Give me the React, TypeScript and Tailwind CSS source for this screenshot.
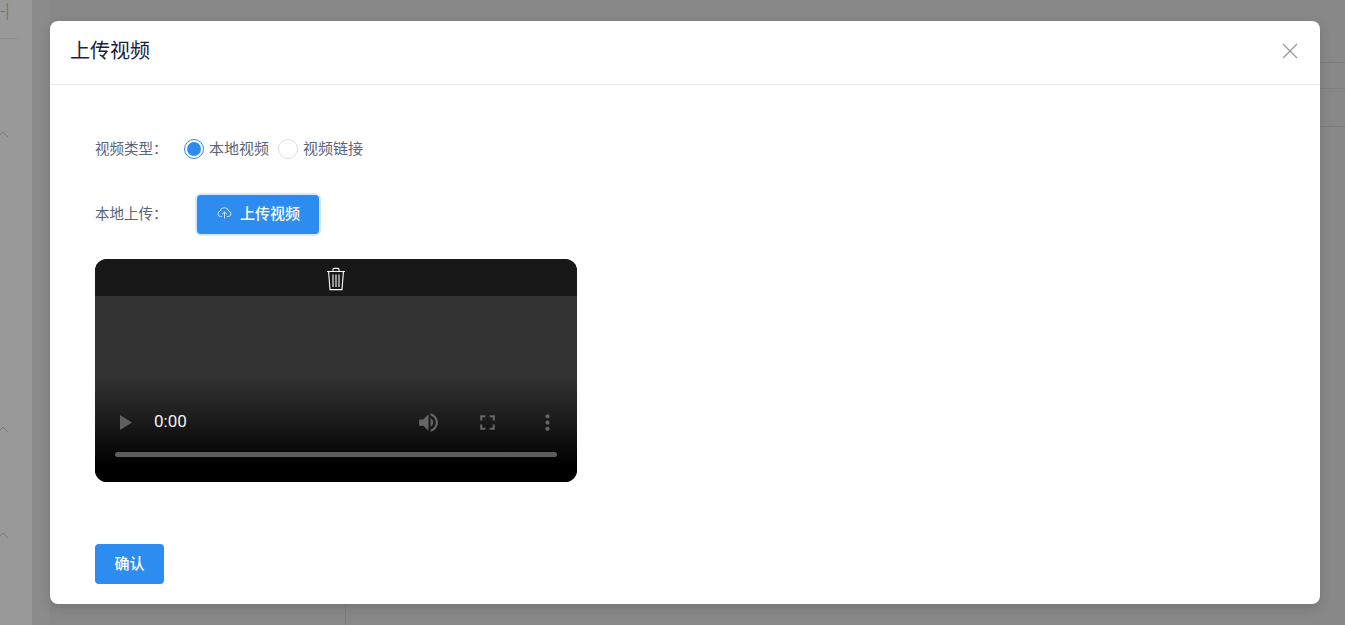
import React from "react";

const font = { fontFamily: '"Noto Sans CJK SC", "Liberation Sans", sans-serif' };

function Chevron() {
  return (
    <svg width="12" height="7" viewBox="0 0 12 7" fill="none" stroke="#7a7a7a" strokeWidth="1">
      <path d="M1 6 L6 1 L11 6" />
    </svg>
  );
}

function CloudUp() {
  return (
    <svg width="15" height="12" viewBox="0 0 15 12" fill="none" stroke="#cfe4fb" strokeWidth="1">
      <path d="M5 9.5H3.4A2.7 2.7 0 0 1 3 4.2 4.5 4.5 0 0 1 11.8 4.2 2.7 2.7 0 0 1 11.8 9.5H10" />
      <path d="M7.5 11.5V5M5 7.4 7.5 5 10 7.4" />
    </svg>
  );
}

function Trash() {
  return (
    <svg width="20" height="24" viewBox="0 0 20 24" fill="none" stroke="#ffffff" strokeWidth="1.1">
      <path d="M1 4.5H19" />
      <path d="M7 4.3V2.6C7 1.8 7.6 1.4 8.2 1.4H11.8C12.4 1.4 13 1.8 13 2.6V4.3" />
      <path d="M2.6 4.6 4 22.6H16L17.4 4.6" />
      <path d="M7 7.5V20M10 7.5V20M13 7.5V20" />
    </svg>
  );
}

function Radio({ checked, label }: { checked?: boolean; label: string }) {
  return (
    <label className="flex items-center gap-[5px]">
      {checked ? (
        <span className="flex h-5 w-5 items-center justify-center rounded-full border border-[#2d8cf0] bg-white">
          <span className="h-[14px] w-[14px] rounded-full bg-[#2d8cf0]" />
        </span>
      ) : (
        <span className="h-5 w-5 rounded-full border border-[#dcdee2] bg-white" />
      )}
      <span className="pb-[2px] text-[15px] text-[#5b6478]">{label}</span>
    </label>
  );
}

function VideoPlayer() {
  return (
    <div className="mt-[25px] flex h-[223px] w-[482px] flex-col overflow-hidden rounded-[12px] bg-black">
      <div className="flex h-[37px] shrink-0 items-center justify-center bg-[#181818] pt-[2px]">
        <Trash />
      </div>
      <div className="flex flex-1 flex-col justify-end bg-[linear-gradient(to_bottom,#333333_0%,#333333_42%,#1c1c1c_66%,#080808_84%,#000000_92%)] pb-[25px]">
        <div className="flex h-[30px] items-center pl-[25px] pr-[17px]">
          <svg width="12" height="15" viewBox="0 0 12 15" fill="#5f5f5f">
            <path d="M0 0 12 7.5 0 15Z" />
          </svg>
          <span
            className="ml-[22px] text-[17px] font-normal text-[#f1f1f1]"
            style={{ fontFamily: "Roboto, sans-serif" }}
          >
            0:00
          </span>
          <svg className="ml-auto" width="25" height="25" viewBox="0 0 24 24" fill="#666666">
            <path d="M3 9v6h4l5 5V4L7 9H3zm13.5 3c0-1.77-1.02-3.29-2.5-4.03v8.05c1.48-.73 2.5-2.25 2.5-4.02z" />
            <path d="M14 3.23v2.06c2.89.86 5 3.54 5 6.71s-2.11 5.85-5 6.71v2.06c4.01-.91 7-4.49 7-8.77s-2.99-7.86-7-8.77z" />
          </svg>
          <svg className="ml-[34px]" width="25" height="25" viewBox="0 0 24 24" fill="#666666">
            <path d="M7 14H5v5h5v-2H7v-3zm-2-4h2V7h3V5H5v5zm12 7h-3v2h5v-5h-2v3zM14 5v2h3v3h2V5h-5z" />
          </svg>
          <svg className="ml-[35px]" width="25" height="25" viewBox="0 0 24 24" fill="#666666">
            <path d="M12 8c1.1 0 2-.9 2-2s-.9-2-2-2-2 .9-2 2 .9 2 2 2zm0 2c-1.1 0-2 .9-2 2s.9 2 2 2 2-.9 2-2-.9-2-2-2zm0 6c-1.1 0-2 .9-2 2s.9 2 2 2 2-.9 2-2-.9-2-2-2z" />
          </svg>
        </div>
        <div className="mx-[20px] mt-[15px] h-[5px] rounded-full bg-[#5c5c5c]" />
      </div>
    </div>
  );
}

export default function App() {
  return (
    <div className="relative h-[625px] w-[1345px] overflow-hidden bg-[#888888]" style={font}>
      {/* dimmed page behind the dialog */}
      <div className="flex h-full">
        <aside className="flex h-full w-[32px] flex-col bg-[#999999]">
          <div className="mt-[-3px] h-[42px] w-[19px] border-b border-[#8f8f8f] text-[15px] leading-[26px] text-[#707070]">
            -|
          </div>
          <div className="mt-[92px] -translate-x-[3px]"><Chevron /></div>
          <div className="mt-[288px] -translate-x-[3px]"><Chevron /></div>
          <div className="mt-[99px] -translate-x-[3px]"><Chevron /></div>
        </aside>
        <div className="w-[18px] bg-[#8b8b8b]" />
        <div className="flex-1 bg-[#888888]" />
      </div>
      <div className="absolute left-[1320px] right-0 top-[62px] h-[27px] border-y border-[#7d7d7d]" />
      <div className="absolute left-[1320px] right-0 top-[126px] h-px bg-[#7d7d7d]" />
      <div className="absolute bottom-0 left-[345px] h-[21px] w-px bg-[#7d7d7d]" />

      {/* dialog */}
      <div className="absolute left-[50px] top-[21px] flex h-[583px] w-[1270px] flex-col rounded-[8px] bg-white shadow-[0_4px_12px_rgba(0,0,0,0.15)]">
        <header className="flex h-[64px] shrink-0 items-center justify-between border-b border-[#e8eaec] pl-5 pr-[21px]">
          <h1 className="pb-[5px] text-[20px] font-normal text-[#17233d]">上传视频</h1>
          <svg width="18" height="18" viewBox="0 0 18 18" stroke="#999999" strokeWidth="1.3" fill="none" className="-mt-[3px]">
            <path d="M2 2 16 16M16 2 2 16" />
          </svg>
        </header>

        <div className="flex flex-1 flex-col pl-[45px] pt-[53px]">
          <div className="flex h-[22px] items-center">
            <span className="w-[89px] pb-[2px] text-[14.5px] text-[#5b6478]">视频类型：</span>
            <div className="flex items-center gap-[9px]">
              <Radio checked label="本地视频" />
              <Radio label="视频链接" />
            </div>
          </div>

          <div className="mt-[35px] flex h-[39px] items-center">
            <span className="w-[102px] pb-[3px] text-[14.5px] text-[#5b6478]">本地上传：</span>
            <button className="flex h-[39px] w-[122px] items-center gap-[8px] rounded-[4px] bg-[#2d8cf0] pb-[3px] pl-[20px] text-[15px] font-medium text-white shadow-[0_0_0_2px_rgba(45,140,240,0.2)]">
              <CloudUp />
              <span>上传视频</span>
            </button>
          </div>

          <VideoPlayer />

          <button className="mt-[62px] h-[40px] w-[69px] rounded-[4px] bg-[#2d8cf0] pb-[2px] text-[15px] font-medium text-white">
            确认
          </button>
        </div>
      </div>
    </div>
  );
}
